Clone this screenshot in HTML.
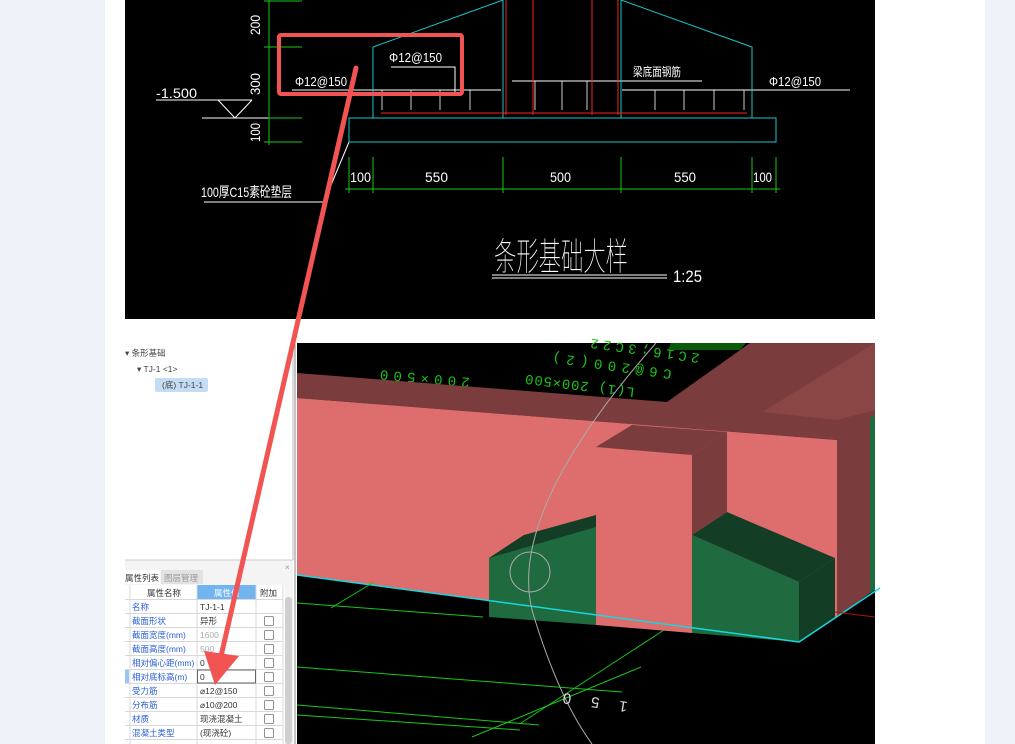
<!DOCTYPE html>
<html><head><meta charset="utf-8"><style>
html,body{margin:0;padding:0;width:1015px;height:744px;overflow:hidden;background:#eef3fa;}
svg{display:block}
.t{font-family:"Liberation Sans","Noto Sans CJK SC",sans-serif;}
</style></head><body>
<svg width="1015" height="744" viewBox="0 0 1015 744" xmlns="http://www.w3.org/2000/svg" class="t">
<rect x="105" y="0" width="880" height="744" fill="#fff"/>
<!-- top CAD drawing -->
<rect x="125" y="0" width="750" height="319" fill="#000"/>
<g stroke="#19c619" stroke-width="1" fill="none">
<line x1="269" y1="0" x2="269" y2="145"/>
<line x1="264" y1="1" x2="302" y2="1"/><line x1="264" y1="47" x2="302" y2="47"/>
<line x1="264" y1="118" x2="302" y2="118"/><line x1="264" y1="142" x2="302" y2="142"/>
<line x1="345" y1="189" x2="780" y2="189"/>
<line x1="349" y1="157" x2="349" y2="193"/><line x1="373" y1="157" x2="373" y2="193"/>
<line x1="503" y1="157" x2="503" y2="193"/><line x1="621" y1="157" x2="621" y2="193"/>
<line x1="752" y1="157" x2="752" y2="193"/><line x1="776" y1="157" x2="776" y2="193"/>
</g>
<g fill="#fff" font-size="14">
<text transform="translate(260,35) rotate(-90)" textLength="20" lengthAdjust="spacingAndGlyphs">200</text>
<text transform="translate(260,95) rotate(-90)" textLength="22" lengthAdjust="spacingAndGlyphs">300</text>
<text transform="translate(260,142) rotate(-90)" textLength="19" lengthAdjust="spacingAndGlyphs">100</text>
<text x="156" y="98" textLength="41" lengthAdjust="spacingAndGlyphs">-1.500</text>
<text x="350" y="182" textLength="21" lengthAdjust="spacingAndGlyphs">100</text>
<text x="425" y="182" textLength="23" lengthAdjust="spacingAndGlyphs">550</text>
<text x="550" y="182" textLength="21" lengthAdjust="spacingAndGlyphs">500</text>
<text x="674" y="182" textLength="22" lengthAdjust="spacingAndGlyphs">550</text>
<text x="753" y="182" textLength="19" lengthAdjust="spacingAndGlyphs">100</text>
<text x="295" y="86" font-size="13" textLength="52" lengthAdjust="spacingAndGlyphs">Φ12@150</text>
<text x="389" y="62" font-size="13" textLength="53" lengthAdjust="spacingAndGlyphs">Φ12@150</text>
<text x="769" y="86" font-size="13" textLength="52" lengthAdjust="spacingAndGlyphs">Φ12@150</text>
<text x="633" y="76" font-size="12" textLength="48" lengthAdjust="spacingAndGlyphs">梁底面钢筋</text>
<text x="201" y="197" font-size="14" textLength="91" lengthAdjust="spacingAndGlyphs">100厚C15素砼垫层</text>
<text x="494" y="270" font-size="38" font-weight="100" textLength="134" lengthAdjust="spacingAndGlyphs">条形基础大样</text>
<text x="673" y="282" font-size="17" textLength="29" lengthAdjust="spacingAndGlyphs">1:25</text>
</g>
<g stroke="#fff" stroke-width="1" fill="none">
<polyline points="156,100 252,100"/><polyline points="218,100 235,118 252,100"/>
<line x1="202" y1="118" x2="268" y2="118"/>
<line x1="292" y1="90" x2="501" y2="90"/><line x1="622" y1="90" x2="850" y2="90"/>
<line x1="512" y1="81" x2="702" y2="81"/>
<polyline points="391,67 455,67 455,92"/>
<line x1="204" y1="202" x2="324" y2="202"/><line x1="324" y1="202" x2="349" y2="142"/>
<line x1="492" y1="275" x2="667" y2="275"/><line x1="492" y1="278" x2="667" y2="278"/>
<g stroke-width="0.8"><line x1="382" y1="90" x2="382" y2="110"/><line x1="411" y1="90" x2="411" y2="110"/><line x1="440" y1="90" x2="440" y2="110"/><line x1="470" y1="90" x2="470" y2="110"/><line x1="535" y1="81" x2="535" y2="110"/><line x1="562" y1="81" x2="562" y2="110"/><line x1="587" y1="81" x2="587" y2="110"/><line x1="655" y1="90" x2="655" y2="110"/><line x1="684" y1="90" x2="684" y2="110"/><line x1="714" y1="90" x2="714" y2="110"/><line x1="744" y1="90" x2="744" y2="110"/></g>
</g>
<g stroke="#16c8cc" stroke-width="1" fill="none">
<polyline points="373,118 373,47 503,0"/><polyline points="621,0 752,47 752,118"/>
<line x1="503" y1="0" x2="503" y2="118"/><line x1="621" y1="0" x2="621" y2="118"/>
<rect x="349" y="118" width="427" height="24"/>
</g>
<g stroke="#ff2020" stroke-width="1" fill="none">
<line x1="506" y1="0" x2="506" y2="115"/><line x1="533" y1="0" x2="533" y2="115"/>
<line x1="592" y1="0" x2="592" y2="115"/><line x1="618" y1="0" x2="618" y2="115"/>
<line x1="381" y1="113" x2="747" y2="113"/>
</g>
<rect x="279" y="35" width="183" height="59" rx="2" fill="none" stroke="#f25454" stroke-width="4"/>
<!-- bottom 3D view -->
<rect x="297" y="343" width="578" height="401" fill="#000"/>
<polygon points="671,343 746,343 740,350 668,350" fill="#0a5a0a"/>
<g fill="#19c619" font-size="14" font-family="Liberation Mono,monospace">
<text transform="translate(470,378) rotate(185)" textLength="90">200×500</text>
<text transform="translate(635,388) rotate(187)" textLength="110">L(1) 200×500</text>
<text transform="translate(672,370) rotate(188)" textLength="120">C6@200(2)</text>
<text transform="translate(700,354) rotate(188)" textLength="110">2C16;3C22</text>
</g>
<polygon points="297,373 667,402 750,343 875,343 875,425 837,440 297,398" fill="#7a3c3c"/>
<polygon points="762,412 875,343 875,410 837,420" fill="#8a4545"/>
<polygon points="297,398 837,440 837,617 799,642 297,575" fill="#de6d6d"/>
<polygon points="837,440 870,418 870,593 837,617" fill="#7a3c3c"/>
<polygon points="870,418 875,415 875,590 870,593" fill="#1f6b3f"/>
<polygon points="596,447 692,455 692,633 596,625" fill="#de6d6d"/>
<polygon points="596,447 632,425 727,432 692,455" fill="#7a3c3c"/>
<polygon points="692,455 727,432 727,512 692,535" fill="#7a3c3c"/>
<polygon points="489,558 524,535 596,527 596,625 489,617" fill="#1f6b3f"/>
<polygon points="489,558 524,535 596,515 596,527" fill="#143d25"/>
<polygon points="692,535 799,582 799,642 692,633" fill="#1f6b3f"/>
<polygon points="692,535 727,512 835,558 799,582" fill="#143d25"/>
<polygon points="799,582 835,558 835,617 799,642" fill="#143d25"/>
<polyline points="297,575 799,642 880,588" fill="none" stroke="#16d8e0" stroke-width="1.5"/>
<g stroke="#19c619" stroke-width="1" fill="none">
<line x1="297" y1="667" x2="622" y2="692"/><line x1="297" y1="705" x2="539" y2="725"/>
<line x1="297" y1="715" x2="520" y2="730"/><line x1="472" y1="737" x2="641" y2="667"/>
<line x1="331" y1="608" x2="374" y2="582"/><line x1="664" y1="630" x2="521" y2="723"/>
<line x1="297" y1="603" x2="483" y2="617"/>
</g>
<line x1="835" y1="612" x2="875" y2="617" stroke="#b01010"/>
<path d="M656 343 Q 500 520 535 620 Q 560 700 592 744" fill="none" stroke="#aaa" stroke-width="1"/>
<ellipse cx="530" cy="572" rx="20" ry="20" fill="none" stroke="#aaa" stroke-width="1"/>
<text transform="translate(628,702) rotate(188)" fill="#ddd" font-size="15" textLength="65">150</text>
<!-- left panel -->
<rect x="125" y="343" width="168" height="401" fill="#fff"/>
<line x1="293" y1="343" x2="293" y2="560" stroke="#bbb"/>
<g font-size="8.5" fill="#444">
<text x="125" y="356">▾ 条形基础</text>
<text x="137" y="372">▾ TJ-1 &lt;1&gt;</text>
<rect x="155" y="378" width="53" height="14" rx="2" fill="#c5dcf5"/>
<text x="162" y="388">(底) TJ-1-1</text>
</g>
<rect x="125" y="560" width="168" height="184" fill="#f4f4f4"/>
<line x1="125" y1="560" x2="293" y2="560" stroke="#ccc"/>
<text x="285" y="570" font-size="8" fill="#999">×</text>
<rect x="125" y="570" width="35" height="14" fill="#fff"/>
<rect x="161" y="570" width="42" height="14" fill="#e2e2e2"/>
<text x="125" y="581" font-size="8.5" fill="#333">属性列表</text>
<text x="164" y="581" font-size="8.5" fill="#999">图层管理</text>
<rect x="125" y="585" width="160" height="159" fill="#fff"/>
<rect x="197" y="585" width="59" height="14" fill="#72b4ef"/>
<g font-size="8.5" fill="#333">
<text x="147" y="596">属性名称</text>
<text x="214" y="596" fill="#fff">属性值</text>
<text x="260" y="596">附加</text>
</g>
<g stroke="#d8d8d8" stroke-width="1">
<line x1="130" y1="585" x2="130" y2="744"/><line x1="197" y1="585" x2="197" y2="744"/><line x1="256" y1="585" x2="256" y2="744"/><line x1="283" y1="585" x2="283" y2="744"/>
<line x1="125" y1="599.5" x2="283" y2="599.5"/><line x1="125" y1="613.5" x2="283" y2="613.5"/><line x1="125" y1="627.5" x2="283" y2="627.5"/><line x1="125" y1="641.5" x2="283" y2="641.5"/><line x1="125" y1="655.5" x2="283" y2="655.5"/><line x1="125" y1="669.5" x2="283" y2="669.5"/><line x1="125" y1="683.5" x2="283" y2="683.5"/><line x1="125" y1="697.5" x2="283" y2="697.5"/><line x1="125" y1="711.5" x2="283" y2="711.5"/><line x1="125" y1="725.5" x2="283" y2="725.5"/><line x1="125" y1="739.5" x2="283" y2="739.5"/>
</g>
<rect x="125" y="670" width="4" height="13" fill="#9cc6f2"/>
<g font-size="8.5" fill="#2a5ed8">
<text x="132" y="610">名称</text><text x="132" y="624">截面形状</text><text x="132" y="638">截面宽度(mm)</text><text x="132" y="652">截面高度(mm)</text><text x="132" y="666">相对偏心距(mm)</text><text x="132" y="680">相对底标高(m)</text><text x="132" y="694">受力筋</text><text x="132" y="708">分布筋</text><text x="132" y="722">材质</text><text x="132" y="736">混凝土类型</text>
</g>
<g font-size="8.5" fill="#333">
<text x="200" y="610">TJ-1-1</text><text x="200" y="624">异形</text><text x="200" y="638" fill="#aaa">1600</text><text x="200" y="652" fill="#aaa">500</text><text x="200" y="666">0</text>
<rect x="197.5" y="670" width="58" height="13" fill="#fff" stroke="#666"/>
<text x="200" y="680">0</text><text x="200" y="694">⌀12@150</text><text x="200" y="708">⌀10@200</text><text x="200" y="722">现浇混凝土</text><text x="200" y="736">(现浇砼)</text>
</g>
<g fill="#fff" stroke="#777" stroke-width="0.8">
<rect x="264.5" y="616.5" width="9" height="9" rx="1"/><rect x="264.5" y="630.5" width="9" height="9" rx="1"/><rect x="264.5" y="644.5" width="9" height="9" rx="1"/><rect x="264.5" y="658.5" width="9" height="9" rx="1"/><rect x="264.5" y="672.5" width="9" height="9" rx="1"/><rect x="264.5" y="686.5" width="9" height="9" rx="1"/><rect x="264.5" y="700.5" width="9" height="9" rx="1"/><rect x="264.5" y="714.5" width="9" height="9" rx="1"/><rect x="264.5" y="728.5" width="9" height="9" rx="1"/>
</g>
<rect x="285" y="597" width="7" height="147" rx="3" fill="#cfcfcf"/>
<line x1="295" y1="343" x2="295" y2="744" stroke="#888"/>
<!-- red arrow -->
<line x1="356" y1="68" x2="219" y2="665" stroke="#f25454" stroke-width="5" stroke-linecap="round"/>
<polygon points="215,685 204,651 239,656" fill="#f25454"/>
</svg>
</body></html>
